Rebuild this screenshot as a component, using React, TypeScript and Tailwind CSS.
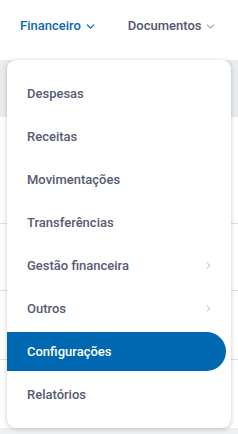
import { ChevronDown, ChevronRight } from "lucide-react";

const items = [
  { label: "Despesas" },
  { label: "Receitas" },
  { label: "Movimentações" },
  { label: "Transferências" },
  { label: "Gestão financeira", sub: true },
  { label: "Outros", sub: true },
  { label: "Configurações", active: true },
  { label: "Relatórios" },
];

export default function App() {
  return (
    <div className="relative w-[238px] h-[434px] overflow-hidden bg-white font-['Roboto',sans-serif]">
      {/* top nav */}
      <div className="h-[60px] flex items-center pl-[20px] pb-[8px] gap-[31px] text-[13px] font-medium">
        <div className="flex items-center gap-[3px] text-[#0e67b3]">
          <span>Financeiro</span>
          <ChevronDown className="w-[13px] h-[13px]" strokeWidth={2.4} />
        </div>
        <div className="flex items-center gap-[3px] text-[#50546e]">
          <span>Documentos</span>
          <ChevronDown className="w-[13px] h-[13px] text-[#a3a6b8]" strokeWidth={2} />
        </div>
      </div>

      {/* page behind */}
      <div className="h-[57px] bg-[#e9ecef]" />
      <div className="h-[107px] border-b border-[#dcdfe3]" />
      <div className="h-[67px] border-b border-[#dcdfe3]" />
      <div className="h-[69px] border-b border-[#dcdfe3]" />
      <div className="h-[68px]" />
      <div className="h-[10px] bg-[#eef0f2]" />

      {/* dropdown */}
      <div className="absolute left-[7px] top-[60px] w-[224px] rounded-[9px] bg-white shadow-[0_1px_5px_rgba(0,0,0,0.22)] py-[12px] flex flex-col">
        {items.map((it) => (
          <div key={it.label} className="h-[43px] py-[2px]">
            <div
              className={
                it.active
                  ? "h-[39px] mr-[5px] rounded-r-full bg-[#0067b1] text-white flex items-center pl-[20px] text-[13px] font-medium"
                  : "h-[39px] flex items-center justify-between pl-[20px] pr-[17px] text-[13px] font-medium text-[#565a74]"
              }
            >
              <span>{it.label}</span>
              {it.sub && <ChevronRight className="w-[11px] h-[11px] text-[#a6a9ba]" strokeWidth={2} />}
            </div>
          </div>
        ))}
      </div>
    </div>
  );
}
